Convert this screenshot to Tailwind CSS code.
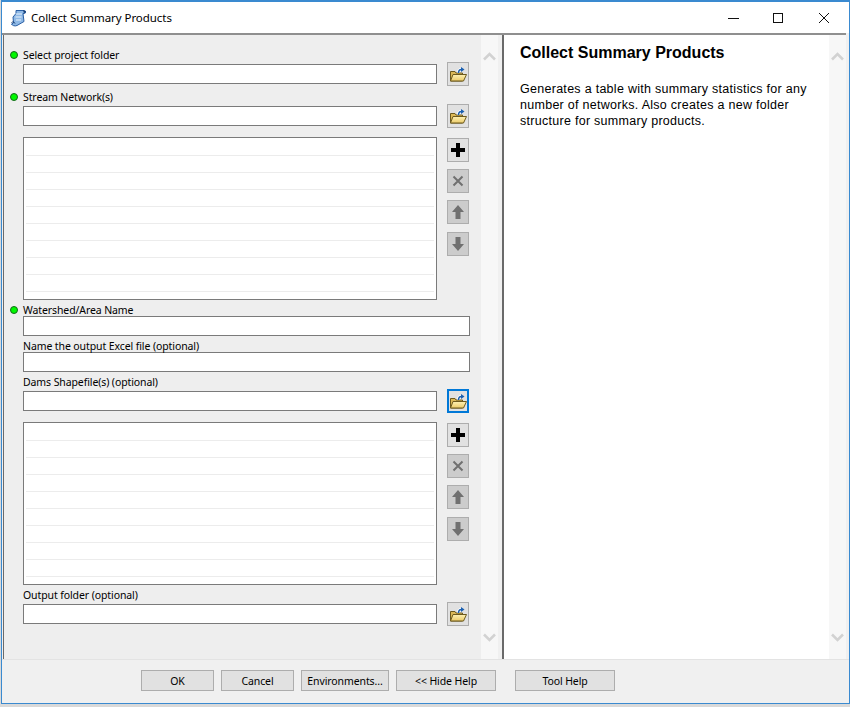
<!DOCTYPE html>
<html><head><meta charset="utf-8"><script src="https://cdn.jsdelivr.net/npm/@tailwindcss/browser@4"></script></head>
<body class="m-0 bg-white">
<svg class="absolute w-0 h-0"><defs><linearGradient id="fg" x1="0" y1="0" x2="0" y2="1"><stop offset="0" stop-color="#fff2b5"/><stop offset="1" stop-color="#eccb68"/></linearGradient><symbol id="folder" viewBox="0 0 17 15"><path d="M.5 14V4.500h4.500l1 1.500h6.500v8z" fill="#dcb957" stroke="#6d5a1e"/><path d="M.5 14l2.500-6.500h13.500L13.500 14z" fill="url(#fg)" stroke="#6d5a1e"/><path d="M8.500 5.500c0-2 1.500-3 3-3" fill="none" stroke="#fff" stroke-width="3"/><path d="M8.500 6c0-2.200 1.500-3.500 3-3.500" fill="none" stroke="#1a5fb0" stroke-width="1.500"/><path d="M11 0l3.500 2.500L11 5z" fill="#1a5fb0"/></symbol><symbol id="plus" viewBox="0 0 16 16"><path d="M6 1h4v5h5v4h-5v5H6v-5H1V6h5z" fill="#000"/></symbol><symbol id="cross" viewBox="0 0 12 12"><path d="M1.500 1.500l9 9M10.500 1.500l-9 9" stroke="#707070" stroke-width="2"/></symbol><symbol id="up" viewBox="0 0 14 16"><path d="M7 1l6 7H9.500v7h-5V8H1z" fill="#707070"/></symbol><symbol id="down" viewBox="0 0 14 16"><path d="M7 15l6-7H9.500V1h-5v7H1z" fill="#707070"/></symbol></defs></svg>
<div class="w-[850px] h-[707px] overflow-hidden bg-[#d9d9d9] font-['Noto_Sans',sans-serif] text-[10.5px] tracking-[-0.1px] text-black">
<div class="w-[849px] h-[704px] ml-px border border-t-2 border-[#3a8ad0] flex flex-col bg-[#f0f0f0] box-border">
  <!-- title -->
  <div class="h-[31px] bg-white flex items-center shrink-0">
    <svg class="ml-[8px] w-[17px] h-[18px]" viewBox="0 0 17 18"><path d="M6 1.500h8.500c1.500 0 1.500 3 0 3H13l1 8-7 4c-2 1-5 0-5.500-1.500l2-1-.5-6L6 4.500z" fill="#8fb9e6" stroke="#2a5fa5"/><path d="M6 5h6M5.500 8h6M6 11h5" stroke="#e8f2fc"/><path d="M1.500 13.500c1.500-1 3-.5 3.500 1" fill="none" stroke="#1c3f73"/><path d="M13 1l3 1.500-2 2z" fill="#1c3f73"/></svg>
    <span class="ml-[4px] text-[11.5px] tracking-[-0.05px]">Collect Summary Products</span>
    <div class="ml-auto flex items-center h-full">
      <svg class="w-[46px] h-[30px]" viewBox="0 0 46 30"><path d="M17 15.500h11" stroke="#111"/></svg>
      <svg class="w-[46px] h-[30px]" viewBox="0 0 46 30"><rect x="16.500" y="10.500" width="9" height="9" fill="none" stroke="#111"/></svg>
      <svg class="w-[46px] h-[30px]" viewBox="0 0 46 30"><path d="M16 10l10 10M26 10L16 20" stroke="#111"/></svg>
    </div>
  </div>
  <div class="h-[2px] w-[844px] shrink-0 bg-[#8f8f8f]"></div>
  <!-- body -->
  <div class="flex h-[624px] shrink-0">
    <div class="w-[2px] bg-[#6a6a6a] shrink-0 border-l border-[#f0f0f0]"></div>
    <div class="w-[477px] shrink-0 bg-[#eeeeee] pl-[19px] pt-[12px]">
      <!-- fields -->
      <div class="flex items-center h-[16px] pt-[2px] relative"><i class="absolute left-[-13px] top-[4px] w-[8px] h-[8px] rounded-full bg-[#00f800] border border-[#14691a] block"></i><span>Select project folder</span></div>
      <div class="flex h-[24px] mt-[-1px] items-center justify-between w-[446px]"><div class="w-[414px] h-[20px] bg-white border border-[#7a7a7a]"></div>
        <div class="w-[22px] h-[24px] bg-[#e1e1e1] border border-[#adadad] flex items-center justify-center"><svg class="w-[17px] h-[15px]"><use href="#folder"/></svg></div></div>
      <div class="flex items-center h-[16px] pt-[2px] mt-[3px] relative"><i class="absolute left-[-13px] top-[4px] w-[8px] h-[8px] rounded-full bg-[#00f800] border border-[#14691a] block"></i><span>Stream Network(s)</span></div>
      <div class="flex h-[24px] mt-[-1px] items-center justify-between w-[446px]"><div class="w-[414px] h-[20px] bg-white border border-[#7a7a7a]"></div>
        <div class="w-[22px] h-[24px] bg-[#e1e1e1] border border-[#adadad] flex items-center justify-center"><svg class="w-[17px] h-[15px]"><use href="#folder"/></svg></div></div>
      <div class="flex justify-between w-[446px] mt-[9px] h-[163px]">
        <div class="w-[414px] h-[163px] bg-white border border-[#7a7a7a] pt-[17px] px-[2px]">
          <div class="h-[17px] border-t border-[#ececec]"></div><div class="h-[17px] border-t border-[#ececec]"></div><div class="h-[17px] border-t border-[#ececec]"></div><div class="h-[17px] border-t border-[#ececec]"></div><div class="h-[17px] border-t border-[#ececec]"></div><div class="h-[17px] border-t border-[#ececec]"></div><div class="h-[17px] border-t border-[#ececec]"></div><div class="h-[17px] border-t border-[#ececec]"></div><div class="h-[7px] border-t border-[#ececec]"></div>
        </div>
        <div class="w-[22px] flex flex-col pt-px">
          <div class="w-[22px] h-[24px] bg-[#e1e1e1] border border-[#adadad] flex items-center justify-center"><svg class="w-[16px] h-[16px]"><use href="#plus"/></svg></div>
          <div class="w-[22px] h-[24px] mt-[7px] bg-[#cccccc] border border-[#adadad] flex items-center justify-center"><svg class="w-[12px] h-[12px]"><use href="#cross"/></svg></div>
          <div class="w-[22px] h-[24px] mt-[7px] bg-[#cccccc] border border-[#adadad] flex items-center justify-center"><svg class="w-[14px] h-[16px]"><use href="#up"/></svg></div>
          <div class="w-[22px] h-[24px] mt-[8px] bg-[#cccccc] border border-[#adadad] flex items-center justify-center"><svg class="w-[14px] h-[16px]"><use href="#down"/></svg></div>
        </div>
      </div>
      <div class="flex items-center h-[16px] pt-[2px] mt-[2px] relative"><i class="absolute left-[-13px] top-[4px] w-[8px] h-[8px] rounded-full bg-[#00f800] border border-[#14691a] block"></i><span>Watershed/Area Name</span></div>
      <div class="w-[447px] h-[20px] mt-[-2px] bg-white border border-[#7a7a7a]"></div>
      <div class="flex items-center h-[16px] pt-[2px] mt-[2px]"><span>Name the output Excel file (optional)</span></div>
      <div class="w-[447px] h-[20px] mt-[-2px] bg-white border border-[#7a7a7a]"></div>
      <div class="flex items-center h-[16px] pt-[2px] mt-[2px]"><span>Dams Shapefile(s) (optional)</span></div>
      <div class="flex h-[24px] mt-[-1px] items-center justify-between w-[446px]"><div class="w-[414px] h-[20px] bg-white border border-[#7a7a7a]"></div>
        <div class="w-[22px] h-[24px] bg-[#e1e1e1] border-2 border-[#0078d7] flex items-center justify-center"><svg class="w-[17px] h-[15px]"><use href="#folder"/></svg></div></div>
      <div class="flex justify-between w-[446px] mt-[9px] h-[163px]">
        <div class="w-[414px] h-[163px] bg-white border border-[#7a7a7a] pt-[17px] px-[2px]">
          <div class="h-[17px] border-t border-[#ececec]"></div><div class="h-[17px] border-t border-[#ececec]"></div><div class="h-[17px] border-t border-[#ececec]"></div><div class="h-[17px] border-t border-[#ececec]"></div><div class="h-[17px] border-t border-[#ececec]"></div><div class="h-[17px] border-t border-[#ececec]"></div><div class="h-[17px] border-t border-[#ececec]"></div><div class="h-[17px] border-t border-[#ececec]"></div><div class="h-[7px] border-t border-[#ececec]"></div>
        </div>
        <div class="w-[22px] flex flex-col pt-px">
          <div class="w-[22px] h-[24px] bg-[#e1e1e1] border border-[#adadad] flex items-center justify-center"><svg class="w-[16px] h-[16px]"><use href="#plus"/></svg></div>
          <div class="w-[22px] h-[24px] mt-[7px] bg-[#cccccc] border border-[#adadad] flex items-center justify-center"><svg class="w-[12px] h-[12px]"><use href="#cross"/></svg></div>
          <div class="w-[22px] h-[24px] mt-[7px] bg-[#cccccc] border border-[#adadad] flex items-center justify-center"><svg class="w-[14px] h-[16px]"><use href="#up"/></svg></div>
          <div class="w-[22px] h-[24px] mt-[8px] bg-[#cccccc] border border-[#adadad] flex items-center justify-center"><svg class="w-[14px] h-[16px]"><use href="#down"/></svg></div>
        </div>
      </div>
      <div class="flex items-center h-[16px] pt-[2px] mt-[2px]"><span>Output folder (optional)</span></div>
      <div class="flex h-[24px] mt-[-1px] items-center justify-between w-[446px]"><div class="w-[414px] h-[20px] bg-white border border-[#7a7a7a]"></div>
        <div class="w-[22px] h-[24px] bg-[#e1e1e1] border border-[#adadad] flex items-center justify-center"><svg class="w-[17px] h-[15px]"><use href="#folder"/></svg></div></div>
    </div>
    <!-- left scroll -->
    <div class="w-[17px] shrink-0 bg-[#f7f7f7] flex flex-col justify-between items-center pt-[17px] pb-[17px]">
      <svg class="w-[13px] h-[9px]" viewBox="0 0 13 9"><path d="M1 7.500l5.500-5.500 5.500 5.500" fill="none" stroke="#d2d2d2" stroke-width="2.500"/></svg>
      <svg class="w-[13px] h-[9px]" viewBox="0 0 13 9"><path d="M1 1.500l5.500 5.500 5.500-5.500" fill="none" stroke="#d2d2d2" stroke-width="2.500"/></svg>
    </div>
    <div class="w-[4px] shrink-0 bg-[#f0f0f0]"></div>
    <div class="w-[2px] shrink-0 bg-[#6a6a6a]"></div>
    <!-- help -->
    <div class="w-[325px] shrink-0 bg-white pl-[16px] pt-[8px] pr-[19px] font-['Liberation_Sans',sans-serif] tracking-normal">
      <h1 class="font-bold text-[16px] leading-[20px]">Collect Summary Products</h1>
      <p class="mt-[18px] text-[12.5px] leading-[16px] tracking-[0.28px]">Generates a table with summary statistics for any number of networks. Also creates a new folder structure for summary products.</p>
    </div>
    <div class="w-[17px] shrink-0 bg-[#f7f7f7] flex flex-col justify-between items-center pt-[17px] pb-[17px]">
      <svg class="w-[13px] h-[9px]" viewBox="0 0 13 9"><path d="M1 7.500l5.500-5.500 5.500 5.500" fill="none" stroke="#d2d2d2" stroke-width="2.500"/></svg>
      <svg class="w-[13px] h-[9px]" viewBox="0 0 13 9"><path d="M1 1.500l5.500 5.500 5.500-5.500" fill="none" stroke="#d2d2d2" stroke-width="2.500"/></svg>
    </div>
  </div>
  <!-- footer -->
  <div class="flex-1 border-t border-[#e3e3e3] flex items-start pt-[10px] pl-[139px] bg-[#f0f0f0]">
    <button class="w-[73px] h-[21px] pt-[2px] bg-[#e1e1e1] border border-[#adadad]">OK</button>
    <button class="ml-[7px] w-[73px] h-[21px] pt-[2px] bg-[#e1e1e1] border border-[#adadad]">Cancel</button>
    <button class="ml-[7px] w-[88px] h-[21px] pt-[2px] bg-[#e1e1e1] border border-[#adadad]">Environments...</button>
    <button class="ml-[7px] w-[100px] h-[21px] pt-[2px] bg-[#e1e1e1] border border-[#adadad]">&lt;&lt; Hide Help</button>
    <button class="ml-[19px] w-[100px] h-[21px] pt-[2px] bg-[#e1e1e1] border border-[#adadad]">Tool Help</button>
  </div>
</div>
</div>
</body></html>
